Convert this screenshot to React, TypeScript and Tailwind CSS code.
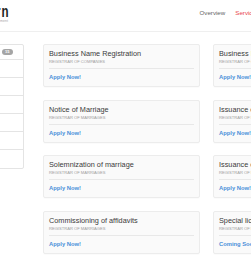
const services = [
  [
    { title: "Business Name Registration", org: "Registrar of Companies", action: "Apply Now!" },
    { title: "Notice of Marriage", org: "Registrar of Marriages", action: "Apply Now!" },
    { title: "Solemnization of marriage", org: "Registrar of Marriages", action: "Apply Now!" },
    { title: "Commissioning of affidavits", org: "Registrar of Marriages", action: "Apply Now!" },
  ],
  [
    { title: "Business Name Reservation", org: "Registrar of Companies", action: "Apply Now!" },
    { title: "Issuance of Marriage Certificate", org: "Registrar of Marriages", action: "Apply Now!" },
    { title: "Issuance of Certified Copy", org: "Registrar of Marriages", action: "Apply Now!" },
    { title: "Special licence", org: "Registrar of Marriages", action: "Coming Soon" },
  ],
];

function ServiceCard({ title, org, action }: { title: string; org: string; action: string }) {
  return (
    <div className="h-[43px] rounded-[2px] border border-[#ececec] bg-[#fafafa] px-[5px] shadow-[0_1px_1px_rgba(0,0,0,0.02)]">
      <div className="border-b border-[#e8e8e8] pt-[4px] pb-[4px]">
        <div className="whitespace-nowrap text-[7.3px] leading-[9px] text-[#3a3a3a]">{title}</div>
        <div className="mt-[1px] whitespace-nowrap text-[4.1px] uppercase leading-[5px] text-[#a0a0a0]">{org}</div>
      </div>
      <div className="whitespace-nowrap py-[5px] text-[5.8px] font-bold leading-[7px] text-[#4a90d9]">{action}</div>
    </div>
  );
}

export default function App() {
  return (
    <div className="relative h-[255px] w-[251px] overflow-hidden bg-white font-['Liberation_Sans',Arial,sans-serif]">
      <header className="flex h-[32px] items-start border-b border-[#efefef]">
        <div className="-ml-[4.5px] pt-[4px]">
          <div className="origin-left scale-x-[0.68] whitespace-nowrap text-[17px] font-bold leading-[15px] tracking-[1.5px] text-[#1e1e1e]">rn</div>
          <div className="whitespace-nowrap pl-[4.5px] text-[3.6px] leading-[5px] text-[#aaa]">ment</div>
        </div>
        <nav className="ml-auto mr-[-8px] flex gap-[10px] pt-[9px] text-[6.2px] leading-[7px]">
          <span className="text-[#666]">Overview</span>
          <span className="text-[#e8474a]">Services</span>
        </nav>
      </header>

      <div className="flex gap-[19px] pt-[12px]">
        <aside className="-ml-[20px] w-[44px] shrink-0">
          <div className="rounded-[2px] border border-[#e4e4e4]">
            <div className="flex h-[15px] items-center justify-end border-b border-[#e4e4e4] pr-[10px]">
              <span className="rounded-full bg-[#a5a5a5] px-[3.5px] text-[4px] font-bold leading-[5.5px] text-white">15</span>
            </div>
            {Array.from({ length: 6 }).map((_, i) => (
              <div key={i} className="h-[18px] border-b border-[#e4e4e4] last:border-b-0" />
            ))}
          </div>
        </aside>

        <div className="flex gap-[13px]">
          {services.map((col, ci) => (
            <div key={ci} className="flex w-[157px] shrink-0 flex-col gap-[12.67px]">
              {col.map((s) => (
                <ServiceCard key={s.title} {...s} />
              ))}
            </div>
          ))}
        </div>
      </div>
    </div>
  );
}
